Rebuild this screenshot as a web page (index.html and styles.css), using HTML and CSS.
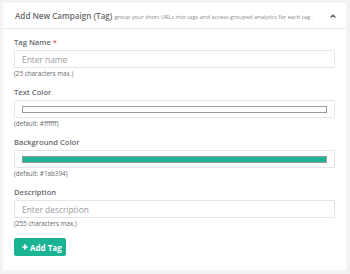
FILE: index.html
```html
<!DOCTYPE html>
<html lang="en">
<head>
    <meta charset="UTF-8">
    <title>Add New Campaign (Tag)</title>
    <meta name="viewport" content="width=device-width, initial-scale=1.0">
    <link rel="stylesheet" href="styles.css">
</head>
<body>
    <div class="page">
        <div class="ibox">
            <div class="ibox-title">
                <h5>Add New Campaign (Tag)</h5>
                <small>group your short URLs into tags and access grouped analytics for each tag .</small>
                <a class="collapse-link" href="#">
                    <svg width="6" height="4" viewBox="0 0 6 4"><path d="M0.6 3.4 L3 1 L5.4 3.4" fill="none" stroke="#6b6b6b" stroke-width="1.4"/></svg>
                </a>
            </div>
            <form class="ibox-content">
                <div class="form-group">
                    <label for="name">Tag Name <span class="req">*</span></label>
                    <input class="form-control" type="text" id="name" placeholder="Enter name">
                    <span class="help">(25 characters max.)</span>
                </div>
                <div class="form-group">
                    <label>Text Color</label>
                    <div class="form-control color-field"><div class="swatch swatch-white"></div></div>
                    <span class="help">(default: #ffffff)</span>
                </div>
                <div class="form-group">
                    <label>Background Color</label>
                    <div class="form-control color-field"><div class="swatch swatch-green"></div></div>
                    <span class="help">(default: #1ab394)</span>
                </div>
                <div class="form-group">
                    <label for="desc">Description</label>
                    <input class="form-control" type="text" id="desc" placeholder="Enter description">
                    <span class="help">(255 characters max.)</span>
                </div>
                <button type="button" class="btn-primary">
                    <svg width="6" height="6" viewBox="0 0 6 6"><path d="M3 0.3 V5.7 M0.3 3 H5.7" stroke="#fff" stroke-width="1.6"/></svg>
                    Add Tag
                </button>
            </form>
        </div>
    </div>
</body>
</html>
```

FILE: styles.css
```css
body {
    margin: 0;
    background: #f3f3f4;
    font-family: 'Open Sans', 'Liberation Sans', sans-serif;
    color: #676a6c;
}
.page {
    padding: 3px 4px 4px 3px;
}
.ibox {
    background: #fff;
}
.ibox-title {
    display: flex;
    align-items: baseline;
    height: 25px;
    padding: 0 10px 0 12px;
    border-bottom: 1px solid #e7eaec;
    line-height: 25px;
}
.ibox-title h5 {
    margin: 0;
    font-size: 8.1px;
    font-weight: 600;
    color: #676a6c;
}
.ibox-title small {
    margin-left: 2px;
    font-size: 5.7px;
    color: #8a8c8e;
}
.collapse-link {
    margin-left: auto;
    align-self: center;
    display: flex;
    margin-right: 0;
}
.ibox-content {
    padding: 8px 11px 14px 11px;
}
.form-group {
    display: flex;
    flex-direction: column;
    margin-bottom: 9px;
}
label {
    font-size: 7.6px;
    font-weight: 600;
    line-height: 10px;
    margin-bottom: 3px;
}
.req {
    color: #ed5565;
}
.form-control {
    box-sizing: border-box;
    height: 18px;
    width: 100%;
    margin: 0;
    border: 1px solid #e5e6e7;
    border-radius: 1px;
    padding: 0 7px;
    font-family: inherit;
    font-size: 8.4px;
    color: #676a6c;
    background: #fff;
    outline: none;
}
.form-control::placeholder {
    color: #9c9c9c;
}
.color-field {
    display: flex;
    align-items: center;
}
.swatch {
    box-sizing: border-box;
    width: 100%;
    height: 7px;
    border: 1px solid #9a9a9a;
}
.swatch-white {
    background: #fff;
}
.swatch-green {
    background: #1ab394;
}
.help {
    margin-top: 2px;
    font-size: 6.3px;
    line-height: 8px;
}
.btn-primary {
    display: flex;
    align-items: center;
    gap: 2px;
    margin-top: 10px;
    height: 18px;
    width: 52px;
    padding: 0 0 0 7px;
    border: 1px solid #1ab394;
    border-radius: 2px;
    background: #1ab394;
    color: #fff;
    font-family: inherit;
    font-size: 8px;
    font-weight: 700;
    cursor: pointer;
}
```
